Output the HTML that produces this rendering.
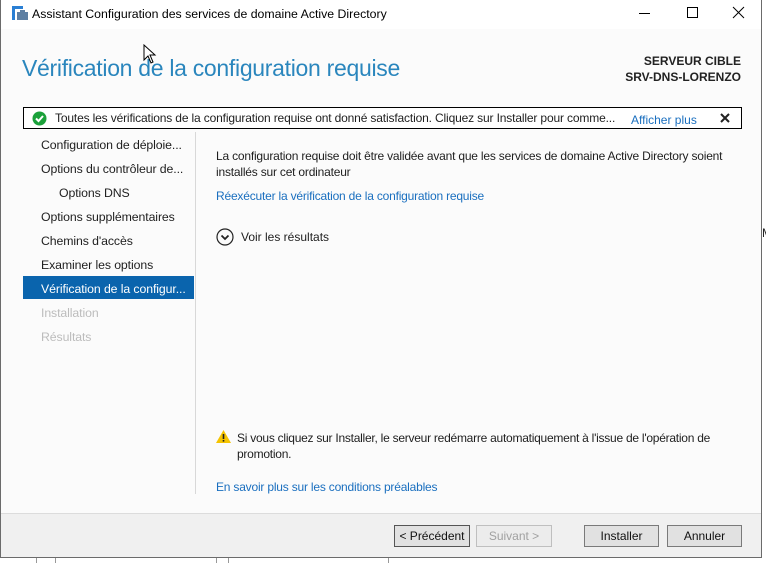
<!DOCTYPE html>
<html><head><meta charset="utf-8"><style>
*{margin:0;padding:0;box-sizing:border-box}
body{width:766px;height:563px;background:#fff;position:relative;overflow:hidden;font-family:"Liberation Sans",sans-serif;font-size:12px;color:#1e1e1e}
.a{position:absolute;white-space:nowrap}
.win{position:absolute;left:0;top:0;width:762px;height:558px;border:1px solid #6b6b6b;border-top:none;background:#fbfbfb}
.tb{position:absolute;left:0;top:0;width:760px;height:29px;background:#fff}
.nav{font-size:12.3px;color:#1e1e1e;letter-spacing:-0.1px}
.link{color:#1a6fbf}
.btn{position:absolute;top:525px;height:22px;border:1px solid #7a7a7a;background:#e1e1e1;font-size:12px;text-align:center;line-height:20px;color:#111}
</style></head><body>
<div class="a" style="left:762px;top:0;width:4px;height:563px;background:#fff"></div>
<div class="a" style="left:0;top:558px;width:766px;height:5px;background:#fff"></div>
<div class="a" style="left:36px;top:558px;width:1px;height:5px;background:#999"></div>
<div class="a" style="left:55px;top:558px;width:1px;height:5px;background:#999"></div>
<div class="a" style="left:216px;top:558px;width:1px;height:5px;background:#999"></div>
<div class="a" style="left:228px;top:558px;width:1px;height:5px;background:#999"></div>
<div class="a" style="left:388px;top:558px;width:1px;height:5px;background:#999"></div>
<div class="win">
<div class="tb"></div>
<svg class="a" style="left:10px;top:5px" width="18" height="16" viewBox="0 0 18 16"><rect x="1" y="1" width="3" height="14" fill="#2a7fd4"/><rect x="4" y="1" width="8" height="3" fill="#2a7fd4"/><rect x="6" y="7" width="11" height="8" fill="#5d7fa3"/><rect x="9" y="5" width="5" height="2" fill="#5d7fa3"/></svg>
<div class="a" style="left:31px;top:7px;font-size:12.3px;color:#000">Assistant Configuration des services de domaine Active Directory</div>
<div class="a" style="left:638px;top:13px;width:11px;height:1px;background:#000"></div>
<div class="a" style="left:686px;top:7px;width:11px;height:11px;border:1px solid #000"></div>
<svg class="a" style="left:731px;top:6px" width="13" height="13"><path d="M1 1L12 12M12 1L1 12" stroke="#000" stroke-width="1"/></svg>

<div class="a" style="left:21px;top:55px;font-size:23px;color:#2a86bd;letter-spacing:-0.3px">Vérification de la configuration requise</div>
<div class="a" style="left:560px;top:53px;width:180px;text-align:right;font-size:12px;font-weight:bold;line-height:16px;color:#222">SERVEUR CIBLE<br>SRV-DNS-LORENZO</div>
<svg class="a" style="left:142px;top:44px" width="16" height="22"><path d="M1 1L1 16L5 12L8 19L10 18L7 11L12 11Z" fill="#fff" stroke="#000"/></svg>

<div class="a" style="left:22px;top:107px;width:719px;height:22px;border:1px solid #000;background:#fff"></div>
<svg class="a" style="left:31px;top:111px" width="15" height="15"><circle cx="7.5" cy="7.5" r="7" fill="#1ba13a"/><path d="M4 7.5L6.5 10L11 5" stroke="#fff" stroke-width="2" fill="none"/></svg>
<div class="a" style="left:54px;top:111px;font-size:12px;width:575px;overflow:hidden;letter-spacing:-0.15px">Toutes les vérifications de la configuration requise ont donné satisfaction. Cliquez sur Installer pour comme...</div>
<div class="a link" style="left:630px;top:113px;font-size:12px">Afficher plus</div>
<svg class="a" style="left:719px;top:113px" width="10" height="10"><path d="M1 1L9 9M9 1L1 9" stroke="#222" stroke-width="2"/></svg>

<div class="a" style="left:194px;top:132px;width:1px;height:362px;background:#d8d8d8"></div>
<div class="a nav" style="left:40px;top:138px">Configuration de déploie...</div>
<div class="a nav" style="left:40px;top:162px">Options du contrôleur de...</div>
<div class="a nav" style="left:58px;top:186px">Options DNS</div>
<div class="a nav" style="left:40px;top:210px">Options supplémentaires</div>
<div class="a nav" style="left:40px;top:234px">Chemins d'accès</div>
<div class="a nav" style="left:40px;top:258px">Examiner les options</div>
<div class="a" style="left:22px;top:276px;width:171px;height:23px;background:#0a64ad"></div>
<div class="a nav" style="left:40px;top:282px;color:#fff">Vérification de la configur...</div>
<div class="a nav" style="left:40px;top:306px;color:#bcbcbc">Installation</div>
<div class="a nav" style="left:40px;top:330px;color:#bcbcbc">Résultats</div>

<div class="a" style="left:215px;top:148px;font-size:12px;line-height:16px;letter-spacing:-0.2px">La configuration requise doit être validée avant que les services de domaine Active Directory soient<br>installés sur cet ordinateur</div>
<div class="a link" style="left:215px;top:189px;font-size:12px;letter-spacing:-0.2px">Réexécuter la vérification de la configuration requise</div>
<svg class="a" style="left:215px;top:228px" width="18" height="18"><circle cx="9" cy="9" r="8" fill="none" stroke="#222" stroke-width="1.2"/><path d="M5.5 7.5L9 11L12.5 7.5" fill="none" stroke="#222" stroke-width="1.8"/></svg>
<div class="a" style="left:240px;top:230px;font-size:12px">Voir les résultats</div>

<svg class="a" style="left:214px;top:429px" width="17" height="15"><path d="M8.5 1L16 14H1Z" fill="#f5c400"/><rect x="7.7" y="5" width="1.6" height="5" fill="#222"/><rect x="7.7" y="11" width="1.6" height="1.6" fill="#222"/></svg>
<div class="a" style="left:236px;top:430px;font-size:12px;line-height:16px;letter-spacing:-0.25px">Si vous cliquez sur Installer, le serveur redémarre automatiquement à l'issue de l'opération de<br>promotion.</div>
<div class="a link" style="left:215px;top:480px;font-size:12px;letter-spacing:-0.2px">En savoir plus sur les conditions préalables</div>

<div class="a" style="left:0;top:513px;width:760px;height:44px;background:#f0f0f0;border-top:1px solid #dcdcdc"></div>
<div class="btn" style="left:393px;width:76px;border-color:#555">&lt; Précédent</div>
<div class="btn" style="left:475px;width:76px;border-color:#bfbfbf;background:#ececec;color:#a0a0a0">Suivant &gt;</div>
<div class="btn" style="left:583px;width:75px">Installer</div>
<div class="btn" style="left:666px;width:75px">Annuler</div>
</div>
<div class="a" style="left:762px;top:226px;font-size:12px;color:#222">M</div>
</body></html>
